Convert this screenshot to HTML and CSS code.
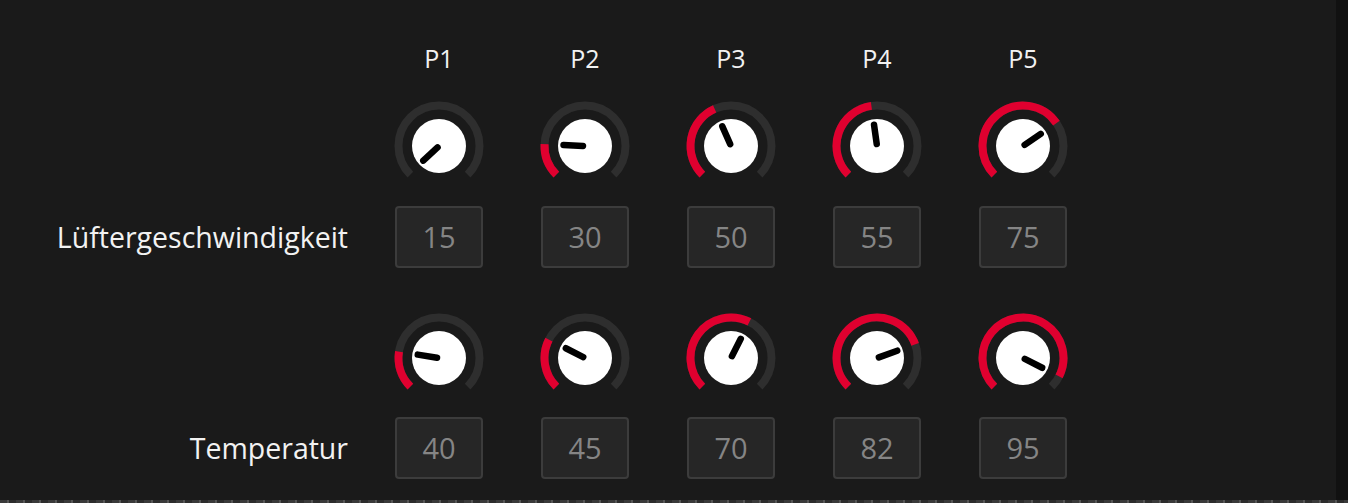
FILE: index.html
```html
<!DOCTYPE html>
<html lang="de">
<head>
<meta charset="utf-8">
<title>Lüfterkurve</title>
<link rel="stylesheet" href="styles.css">
</head>
<body>
<div class="app">
  <div class="grid">
    <div class="cell"></div>
    <div class="head">P1</div>
    <div class="head">P2</div>
    <div class="head">P3</div>
    <div class="head">P4</div>
    <div class="head">P5</div>

    <div class="cell"></div>
    <div class="knob-cell"><svg class="knob" viewBox="0 0 92 92"><path class="track" d="M17.36 74.64 A40.5 40.5 0 1 1 74.64 74.64"/><circle class="cap" cx="46" cy="46" r="27"/><line class="ptr" x1="46" y1="44" x2="46" y2="24.5" transform="rotate(-133 46 46)"/></svg></div>
    <div class="knob-cell"><svg class="knob" viewBox="0 0 92 92"><path class="track" d="M17.36 74.64 A40.5 40.5 0 1 1 74.64 74.64"/><path class="fill" d="M17.36 74.64 A40.5 40.5 0 0 1 5.543 44.13"/><circle class="cap" cx="46" cy="46" r="27"/><line class="ptr" x1="46" y1="44" x2="46" y2="24.5" transform="rotate(-87.353 46 46)"/></svg></div>
    <div class="knob-cell"><svg class="knob" viewBox="0 0 92 92"><path class="track" d="M17.36 74.64 A40.5 40.5 0 1 1 74.64 74.64"/><path class="fill" d="M17.36 74.64 A40.5 40.5 0 0 1 29.642 8.951"/><circle class="cap" cx="46" cy="46" r="27"/><line class="ptr" x1="46" y1="44" x2="46" y2="24.5" transform="rotate(-23.824 46 46)"/></svg></div>
    <div class="knob-cell"><svg class="knob" viewBox="0 0 92 92"><path class="track" d="M17.36 74.64 A40.5 40.5 0 1 1 74.64 74.64"/><path class="fill" d="M17.36 74.64 A40.5 40.5 0 0 1 40.405 5.888"/><circle class="cap" cx="46" cy="46" r="27"/><line class="ptr" x1="46" y1="44" x2="46" y2="24.5" transform="rotate(-7.941 46 46)"/></svg></div>
    <div class="knob-cell"><svg class="knob" viewBox="0 0 92 92"><path class="track" d="M17.36 74.64 A40.5 40.5 0 1 1 74.64 74.64"/><path class="fill" d="M17.36 74.64 A40.5 40.5 0 1 1 79.422 23.126"/><circle class="cap" cx="46" cy="46" r="27"/><line class="ptr" x1="46" y1="44" x2="46" y2="24.5" transform="rotate(55.588 46 46)"/></svg></div>

    <div class="label">Lüftergeschwindigkeit</div>
    <div class="box-cell"><div class="box">15</div></div>
    <div class="box-cell"><div class="box">30</div></div>
    <div class="box-cell"><div class="box">50</div></div>
    <div class="box-cell"><div class="box">55</div></div>
    <div class="box-cell"><div class="box">75</div></div>

    <div class="cell"></div>
    <div class="knob-cell"><svg class="knob" viewBox="0 0 92 92"><path class="track" d="M17.36 74.64 A40.5 40.5 0 1 1 74.64 74.64"/><path class="fill" d="M17.36 74.64 A40.5 40.5 0 0 1 5.999 39.665"/><circle class="cap" cx="46" cy="46" r="27"/><line class="ptr" x1="46" y1="44" x2="46" y2="24.5" transform="rotate(-81 46 46)"/></svg></div>
    <div class="knob-cell"><svg class="knob" viewBox="0 0 92 92"><path class="track" d="M17.36 74.64 A40.5 40.5 0 1 1 74.64 74.64"/><path class="fill" d="M17.36 74.64 A40.5 40.5 0 0 1 9.914 27.613"/><circle class="cap" cx="46" cy="46" r="27"/><line class="ptr" x1="46" y1="44" x2="46" y2="24.5" transform="rotate(-63 46 46)"/></svg></div>
    <div class="knob-cell"><svg class="knob" viewBox="0 0 92 92"><path class="track" d="M17.36 74.64 A40.5 40.5 0 1 1 74.64 74.64"/><path class="fill" d="M17.36 74.64 A40.5 40.5 0 0 1 64.387 9.914"/><circle class="cap" cx="46" cy="46" r="27"/><line class="ptr" x1="46" y1="44" x2="46" y2="24.5" transform="rotate(27 46 46)"/></svg></div>
    <div class="knob-cell"><svg class="knob" viewBox="0 0 92 92"><path class="track" d="M17.36 74.64 A40.5 40.5 0 1 1 74.64 74.64"/><path class="fill" d="M17.36 74.64 A40.5 40.5 0 1 1 84.106 32.281"/><circle class="cap" cx="46" cy="46" r="27"/><line class="ptr" x1="46" y1="44" x2="46" y2="24.5" transform="rotate(70.2 46 46)"/></svg></div>
    <div class="knob-cell"><svg class="knob" viewBox="0 0 92 92"><path class="track" d="M17.36 74.64 A40.5 40.5 0 1 1 74.64 74.64"/><path class="fill" d="M17.36 74.64 A40.5 40.5 0 1 1 82.086 64.387"/><circle class="cap" cx="46" cy="46" r="27"/><line class="ptr" x1="46" y1="44" x2="46" y2="24.5" transform="rotate(117 46 46)"/></svg></div>

    <div class="label">Temperatur</div>
    <div class="box-cell"><div class="box">40</div></div>
    <div class="box-cell"><div class="box">45</div></div>
    <div class="box-cell"><div class="box">70</div></div>
    <div class="box-cell"><div class="box">82</div></div>
    <div class="box-cell"><div class="box">95</div></div>
  </div>
</div>
<div class="bottom-strip"></div>
</body>
</html>
```

FILE: styles.css
```css
html, body {
  margin: 0;
  padding: 0;
  background: #111111;
  overflow: hidden;
}

body {
  width: 1348px;
  height: 503px;
  font-family: "Open Sans", "Noto Sans", "Liberation Sans", sans-serif;
}

.app {
  width: 1336px;
  height: 500px;
  background: #1a1a1a;
  box-sizing: border-box;
  padding-top: 40px;
}

.grid {
  display: grid;
  grid-template-columns: 366px repeat(5, 146px);
  grid-template-rows: 60px 106px 106px 105px 62px;
  align-items: start;
}

.head {
  height: 36px;
  line-height: 36px;
  text-align: center;
  color: #f2f2f2;
  font-size: 25px;
}

.knob-cell {
  display: flex;
  justify-content: center;
}

.knob {
  width: 92px;
  height: 92px;
  display: block;
}

.track {
  fill: none;
  stroke: #2e2e2e;
  stroke-width: 8;
}

.fill {
  fill: none;
  stroke: #e0002f;
  stroke-width: 8;
}

.cap {
  fill: #ffffff;
}

.ptr {
  stroke: #000000;
  stroke-width: 6.5;
  stroke-linecap: round;
}

.label {
  height: 62px;
  line-height: 62px;
  text-align: right;
  padding-right: 18px;
  color: #f2f2f2;
  font-size: 28.5px;
}

.box-cell {
  display: flex;
  justify-content: center;
}

.box {
  width: 88px;
  height: 62px;
  box-sizing: border-box;
  border: 2px solid #3c3c3c;
  border-radius: 4px;
  background: #262626;
  color: #858585;
  font-size: 29px;
  line-height: 58px;
  text-align: center;
}

.bottom-strip {
  height: 3px;
  width: 1348px;
  background: repeating-linear-gradient(90deg, #3a3a3a 0 7px, #555555 7px 9px, #2c2c2c 9px 16px);
}
```
